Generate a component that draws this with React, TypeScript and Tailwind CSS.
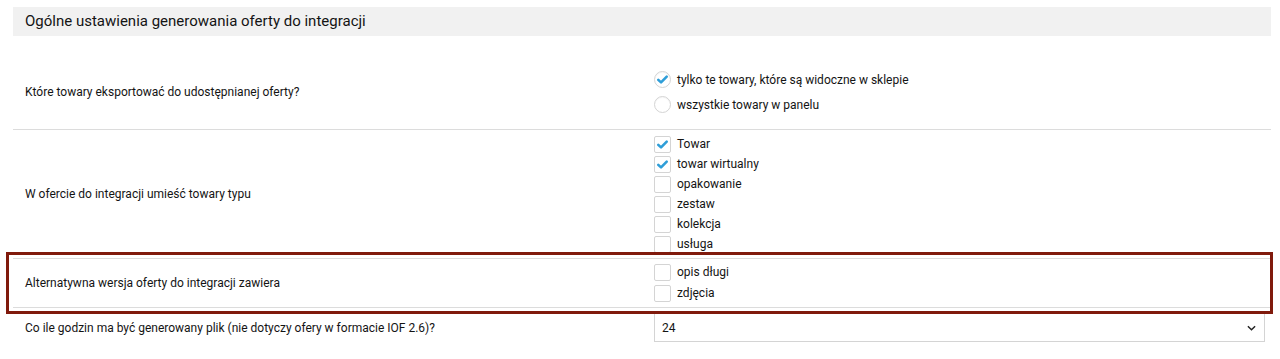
import React from 'react'

const Check = () => (
  <svg viewBox="0 0 16 16" className="w-[13px] h-[13px]">
    <path d="M2.8 8.4 L6.2 11.6 L13.2 4.4" fill="none" stroke="#2f9ed8" strokeWidth="3.2" strokeLinecap="round" strokeLinejoin="round" />
  </svg>
)

function Radio({ checked, label }: { checked?: boolean; label: string }) {
  return (
    <label className="flex items-center gap-[6px] h-[25px]">
      <span className="w-[17px] h-[17px] rounded-full border border-[#d4d4d4] bg-white flex items-center justify-center shadow-[inset_0_1px_1px_rgba(0,0,0,0.04)]">
        {checked && <Check />}
      </span>
      <span>{label}</span>
    </label>
  )
}

function Box({ checked, label }: { checked?: boolean; label: string }) {
  return (
    <label className="flex items-center gap-[6px] h-[20px]">
      <span className="w-[17px] h-[17px] rounded-[2px] border border-[#d4d4d4] bg-white flex items-center justify-center">
        {checked && <Check />}
      </span>
      <span>{label}</span>
    </label>
  )
}

function Row({ label, children, className = '' }: { label: string; children: React.ReactNode; className?: string }) {
  return (
    <div className={`grid grid-cols-[641px_1fr] border-b border-[#dcdcdc] ${className}`}>
      <div className="flex items-center pl-[12px]">{label}</div>
      <div className="flex flex-col justify-center">{children}</div>
    </div>
  )
}

export default function App() {
  return (
    <div className="relative bg-white h-[359px] pt-[7px] px-[13px] pr-[9px] text-[12px] text-[#141414]" style={{ fontFamily: 'Roboto, "Noto Sans", sans-serif' }}>
      <div className="bg-[#f1f1f1] h-[29px] flex items-center pl-[12px] text-[15px] text-[#141414]">
        Ogólne ustawienia generowania oferty do integracji
      </div>

      <Row label="Które towary eksportować do udostępnianej oferty?" className="pt-[31px] pb-[12px]">
        <Radio checked label="tylko te towary, które są widoczne w sklepie" />
        <Radio label="wszystkie towary w panelu" />
      </Row>

      <Row label="W ofercie do integracji umieść towary typu" className="pt-[4px] pb-[4px]">
        <Box checked label="Towar" />
        <Box checked label="towar wirtualny" />
        <Box label="opakowanie" />
        <Box label="zestaw" />
        <Box label="kolekcja" />
        <Box label="usługa" />
      </Row>

      <Row label="Alternatywna wersja oferty do integracji zawiera" className="pt-[3px] pb-[4px]">
        <div className="flex flex-col gap-[1px]">
          <Box label="opis długi" />
          <Box label="zdjęcia" />
        </div>
      </Row>

      <div className="grid grid-cols-[641px_1fr] pt-[5px]">
        <div className="flex items-center pl-[12px]">Co ile godzin ma być generowany plik (nie dotyczy ofery w formacie IOF 2.6)?</div>
        <div className="pr-[6px]">
          <div className="h-[29px] border border-[#d4d4d4] flex items-center justify-between pl-[7px] pr-[8px]">
            <span>24</span>
            <svg viewBox="0 0 10 6" className="w-[9px] h-[6px]">
              <path d="M1 1 L5 5 L9 1" fill="none" stroke="#222" strokeWidth="1.6" />
            </svg>
          </div>
        </div>
      </div>

      <div className="absolute left-[6px] top-[252px] w-[1267px] h-[62px] border-[3px] border-[#801a0c] pointer-events-none" />
    </div>
  )
}
